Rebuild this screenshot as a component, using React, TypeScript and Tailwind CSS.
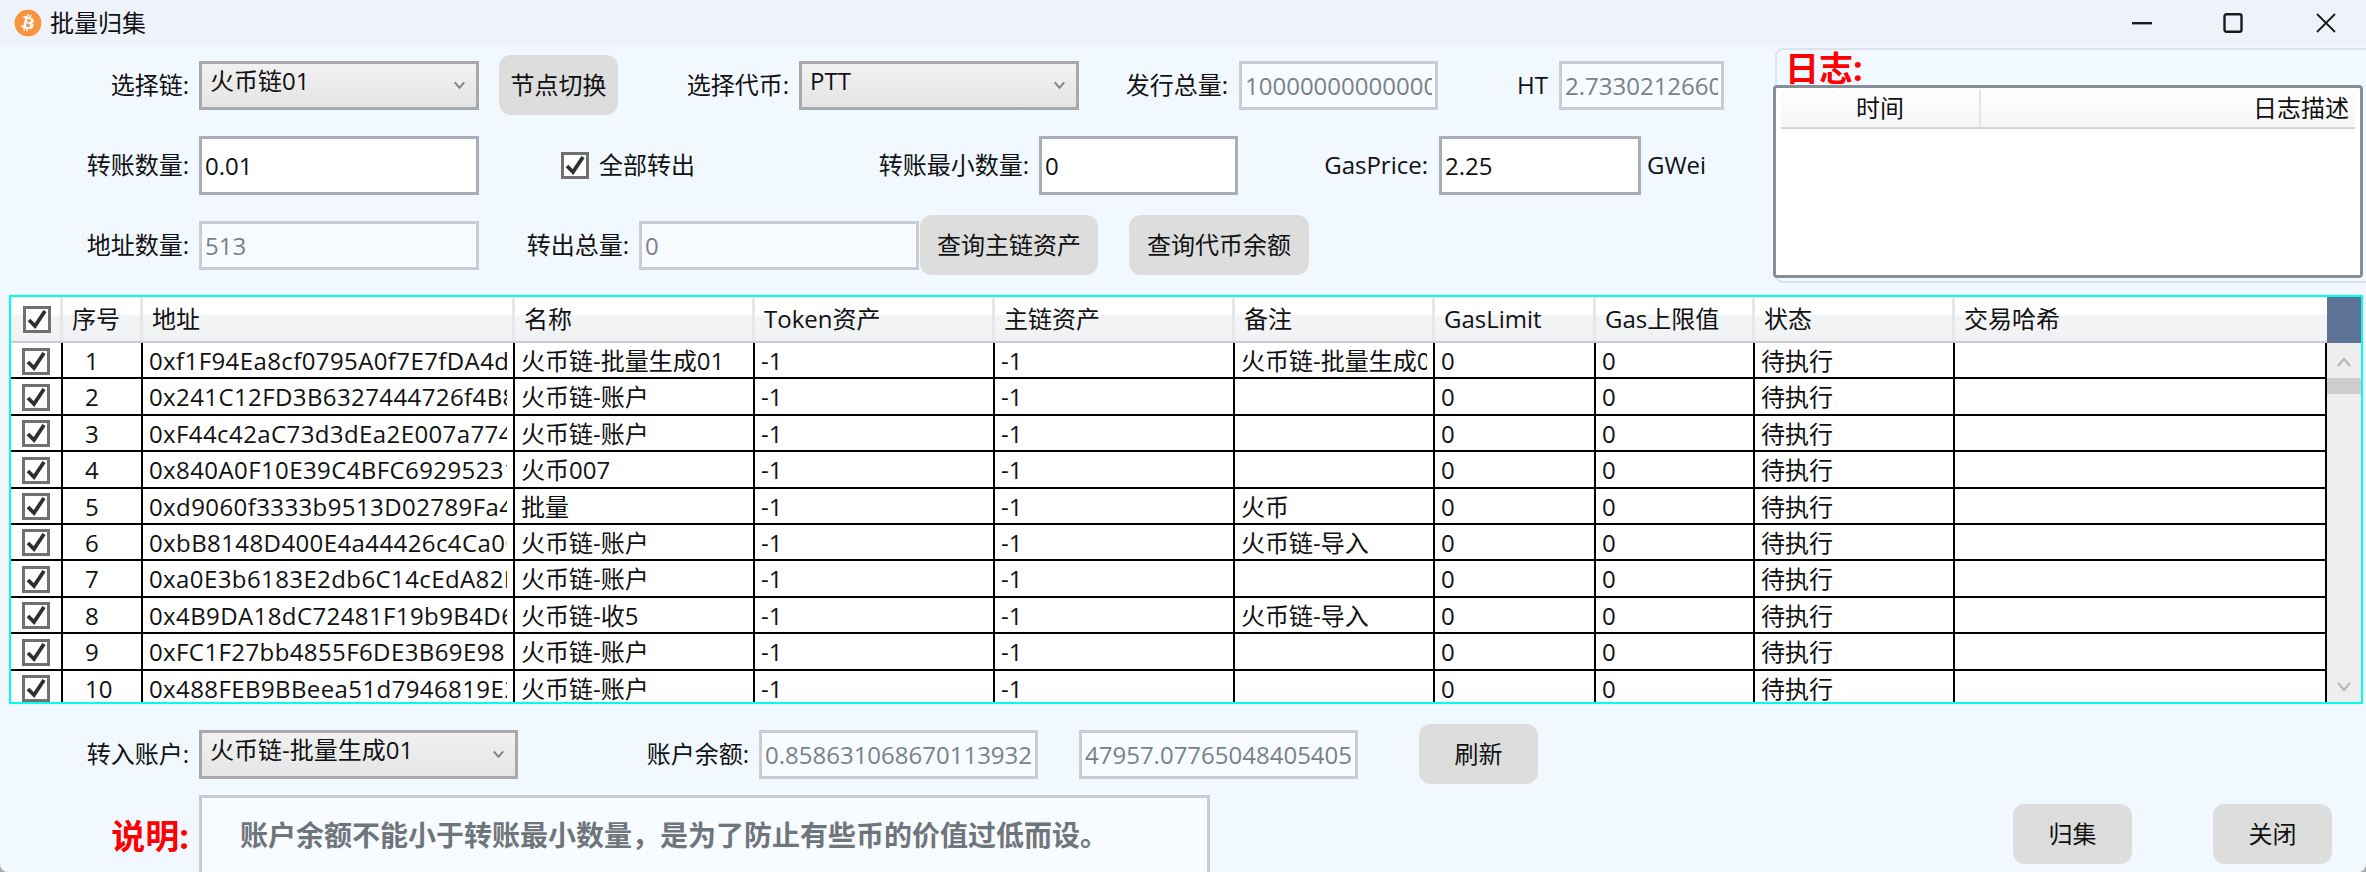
import React from "react";
import { FaBitcoin } from "react-icons/fa";

const rows = [
  { id: 1, address: "0xf1F94Ea8cf0795A0f7E7fDA4dE1c2B37aa", name: "火币链-批量生成01", note: "火币链-批量生成01" },
  { id: 2, address: "0x241C12FD3B6327444726f4B8a81dE0c96b", name: "火币链-账户", note: "" },
  { id: 3, address: "0xF44c42aC73d3dEa2E007a774b1C9f0E2d3", name: "火币链-账户", note: "" },
  { id: 4, address: "0x840A0F10E39C4BFC692952317f3D0a8Ce2", name: "火币007", note: "" },
  { id: 5, address: "0xd9060f3333b9513D02789Fa4e77cB10aD5", name: "批量", note: "火币" },
  { id: 6, address: "0xbB8148D400E4a44426c4Ca0C1dF9e27B03", name: "火币链-账户", note: "火币链-导入" },
  { id: 7, address: "0xa0E3b6183E2db6C14cEdA82D90fB3e17c4", name: "火币链-账户", note: "" },
  { id: 8, address: "0x4B9DA18dC72481F19b9B4D6c02E8a7f1B5", name: "火币链-收5", note: "火币链-导入" },
  { id: 9, address: "0xFC1F27bb4855F6DE3B69E9817aD0c24E6f", name: "火币链-账户", note: "" },
  { id: 10, address: "0x488FEB9BBeea51d7946819E2c3A05fD17b", name: "火币链-账户", note: "" },
];

const headers = ["序号", "地址", "名称", "Token资产", "主链资产", "备注", "GasLimit", "Gas上限值", "状态", "交易哈希"];

const gridCols = "grid grid-cols-[52px_80px_372px_240px_240px_240px_200px_161px_159px_200px_372px]";

const Chevron = ({ up = false, className = "" }: { up?: boolean; className?: string }) => (
  <svg viewBox="0 0 14 10" className={className} fill="none" stroke="currentColor" strokeWidth="2.2">
    <polyline points={up ? "1,9 7,2 13,9" : "1,1 7,8 13,1"} />
  </svg>
);

const CheckBox = ({ className = "" }: { className?: string }) => (
  <div className={`w-[28px] h-[27px] border-[3px] border-[#707070] bg-white flex items-center justify-center shrink-0 ${className}`}>
    <svg viewBox="0 0 22 21" className="w-[22px] h-[21px]" fill="none" stroke="#2f2f2f" strokeWidth="3.8">
      <polyline points="3,11 9,17 19,2" />
    </svg>
  </div>
);

const Label = ({ w, children }: { w: string; children: React.ReactNode }) => (
  <div className={`${w} text-right shrink-0 whitespace-nowrap`}>{children}</div>
);

const Select = ({ w, value }: { w: string; value: string }) => (
  <div className={`${w} ml-[10px] h-[49px] shrink-0 border-[3px] border-[#a9a9a9] bg-gradient-to-b from-[#f1f1f1] to-[#e5e5e5] flex items-center justify-between pl-[8px] pr-[11px]`}>
    <span className="pb-[8px] whitespace-nowrap">{value}</span>
    <Chevron className="w-[11px] h-[9px] text-[#7c7c7c]" />
  </div>
);

const Field = ({ w, value, disabled = false, h = "h-[49px]", ml = "ml-[10px]" }: { w: string; value: string; disabled?: boolean; h?: string; ml?: string }) => (
  <input
    readOnly
    value={value}
    className={`${w} ${h} ${ml} shrink-0 border-[3px] px-[3px] outline-none ${
      disabled ? "border-[#c8ccd4] bg-[#f8fbff] text-[#7b8188]" : "border-[#a9adb5] bg-white text-[#111111]"
    }`}
  />
);

const Btn = ({ w, ml, children }: { w: string; ml: string; children: React.ReactNode }) => (
  <button className={`${w} ${ml} h-[60px] shrink-0 rounded-[12px] bg-[#dddddd] text-[#111111]`}>{children}</button>
);

const Cell = ({ pl = "pl-[6px]", className = "", children }: { pl?: string; className?: string; children?: React.ReactNode }) => (
  <div className={`border-r-2 border-black flex items-center ${pl} pr-[6px]`}>
    <span className={`block w-full overflow-hidden whitespace-nowrap ${className}`}>{children}</span>
  </div>
);

export default function App() {
  return (
    <div className="w-[2366px] h-[872px] overflow-hidden bg-[#a9a9a9] text-[24px] text-[#111111] font-['Open_Sans','Noto_Sans_CJK_SC',sans-serif]">
      <div className="h-full overflow-hidden rounded-b-[8px] bg-[#f2f8ff]">
        {/* title bar */}
        <div className="h-[45px] bg-[#eef3fb] flex items-center pl-[14px]">
          <FaBitcoin className="w-[28px] h-[28px] text-[#f7953f] bg-white rounded-full" />
          <span className="ml-[8px]">批量归集</span>
          <div className="ml-auto flex items-center">
            <svg viewBox="0 0 20 4" className="w-[20px] h-[4px] mr-[71px]"><rect y="1" width="20" height="2.4" fill="#1a1a1a" /></svg>
            <svg viewBox="0 0 20 20" className="w-[20px] h-[20px] mr-[73px]" fill="none" stroke="#1a1a1a" strokeWidth="2.4"><rect x="1.5" y="1.2" width="17" height="17.6" rx="2" /></svg>
            <svg viewBox="0 0 20 20" className="w-[20px] h-[20px] mr-[30px]" fill="none" stroke="#1a1a1a" strokeWidth="1.8"><path d="M1 1 L19 19 M19 1 L1 19" /></svg>
          </div>
        </div>

        {/* form + log */}
        <div className="h-[250px] flex">
          <div className="w-[1775px] shrink-0 pt-[10px] flex flex-col gap-[20px]">
            <div className="h-[60px] flex items-center">
              <Label w="w-[189px]">选择链:</Label>
              <Select w="w-[280px]" value="火币链01" />
              <Btn w="w-[119px]" ml="ml-[20px]">节点切换</Btn>
              <Label w="w-[171px]">选择代币:</Label>
              <Select w="w-[280px]" value="PTT" />
              <Label w="w-[149px]">发行总量:</Label>
              <Field w="w-[199px]" value="10000000000000000000" disabled ml="ml-[11px]" />
              <Label w="w-[110px]">HT</Label>
              <Field w="w-[165px]" value="2.73302126600000" disabled ml="ml-[11px]" />
            </div>
            <div className="h-[60px] flex items-center">
              <Label w="w-[189px]">转账数量:</Label>
              <Field w="w-[280px]" value="0.01" h="h-[59px]" />
              <CheckBox className="ml-[82px]" />
              <span className="ml-[10px] whitespace-nowrap">全部转出</span>
              <Label w="w-[334px]">转账最小数量:</Label>
              <Field w="w-[199px]" value="0" h="h-[59px]" />
              <Label w="w-[190px]">GasPrice:</Label>
              <Field w="w-[202px]" value="2.25" h="h-[59px]" ml="ml-[11px]" />
              <span className="ml-[6px]">GWei</span>
            </div>
            <div className="h-[60px] flex items-center">
              <Label w="w-[189px]">地址数量:</Label>
              <Field w="w-[280px]" value="513" disabled />
              <Label w="w-[150px]">转出总量:</Label>
              <Field w="w-[280px]" value="0" disabled />
              <Btn w="w-[178px]" ml="ml-[1px]">查询主链资产</Btn>
              <Btn w="w-[180px]" ml="ml-[31px]">查询代币余额</Btn>
            </div>
          </div>
          <div className="mt-[3px] h-[235px] w-[600px] shrink-0 border-2 border-[#dde3ea] rounded-[8px] pl-[8px]">
            <div className="h-[35px] text-[34px] leading-[36px] font-bold text-[#ff0000]">日志:</div>
            <div className="-ml-[12px] w-[590px] h-[193px] border-[3px] border-[#868e98] rounded-[4px] bg-white px-[5px] pt-[1px]">
              <div className="h-[40px] flex border-b-2 border-[#d0d3d8] bg-gradient-to-b from-white to-[#f5f5f6]">
                <div className="w-[200px] border-r-2 border-[#e3e4e7] flex items-center justify-center">时间</div>
                <div className="flex-1 flex items-center justify-end pr-[6px]">日志描述</div>
              </div>
            </div>
          </div>
        </div>

        {/* wallet table */}
        <div className="ml-[9px] w-[2354px] h-[409px] border-2 border-[#00ffea] bg-white flex">
          <div className="w-[2316px] shrink-0 h-full overflow-hidden">
            <div className={`${gridCols} h-[46px] border-b-2 border-[#c9cbd1] bg-[linear-gradient(to_bottom,#ffffff_0%,#ffffff_40%,#f3f4f6_42%,#f1f2f4_100%)]`}>
              <div className="border-r-[3px] border-[#e6e7ea] flex items-center pl-[12px]">
                <CheckBox />
              </div>
              {headers.map((title) => (
                <div key={title} className="border-r-[3px] border-[#e6e7ea] last:border-r-0 flex items-center pl-[9px] whitespace-nowrap">
                  {title}
                </div>
              ))}
            </div>
            {rows.map((row) => (
              <div key={row.id} className={`${gridCols} h-[36.4px] border-b-2 border-black`}>
                <div className="border-r-2 border-black flex items-center pl-[11px]">
                  <CheckBox />
                </div>
                <Cell pl="pl-[22px]">{row.id}</Cell>
                <Cell className="tracking-[0.4px]">{row.address}</Cell>
                <Cell>{row.name}</Cell>
                <Cell>-1</Cell>
                <Cell>-1</Cell>
                <Cell>{row.note}</Cell>
                <Cell>0</Cell>
                <Cell>0</Cell>
                <Cell>待执行</Cell>
                <Cell />
              </div>
            ))}
          </div>
          {/* scrollbar */}
          <div className="flex-1 flex flex-col items-center bg-[#eeeeee] text-[#b9b9b9]">
            <div className="w-full h-[46px] bg-[#5f7396]" />
            <Chevron up className="w-[14px] h-[10px] mt-[14px]" />
            <div className="w-full h-[16px] mt-[11px] bg-[#cdcdcd]" />
            <Chevron className="w-[14px] h-[10px] mt-auto mb-[10px]" />
          </div>
        </div>

        {/* target account */}
        <div className="h-[60px] mt-[20px] flex items-center">
          <Label w="w-[189px]">转入账户:</Label>
          <Select w="w-[319px]" value="火币链-批量生成01" />
          <Label w="w-[231px]">账户余额:</Label>
          <Field w="w-[279px]" value="0.858631068670113932" disabled />
          <Field w="w-[279px]" value="47957.07765048405405" disabled ml="ml-[41px]" />
          <Btn w="w-[119px]" ml="ml-[61px]">刷新</Btn>
        </div>

        {/* note + actions */}
        <div className="mt-[11px] flex items-start">
          <div className="w-[189px] shrink-0 mt-[19px] text-right text-[34px] leading-[44px] font-bold text-[#ff0000]">说明:</div>
          <div className="ml-[10px] w-[1011px] h-[100px] shrink-0 border-[3px] border-[#c8ccd4] bg-[#f8fbff] pl-[38px] pt-[18px] text-[28px] leading-[38px] font-bold text-[#6f757b] whitespace-nowrap">
            {"账户余额不能小于转账最小数量\uFF0C是为了防止有些币的价值过低而设。"}
          </div>
          <Btn w="w-[119px]" ml="ml-[803px] mt-[9px]">归集</Btn>
          <Btn w="w-[119px]" ml="ml-[81px] mt-[9px]">关闭</Btn>
        </div>
      </div>
    </div>
  );
}
